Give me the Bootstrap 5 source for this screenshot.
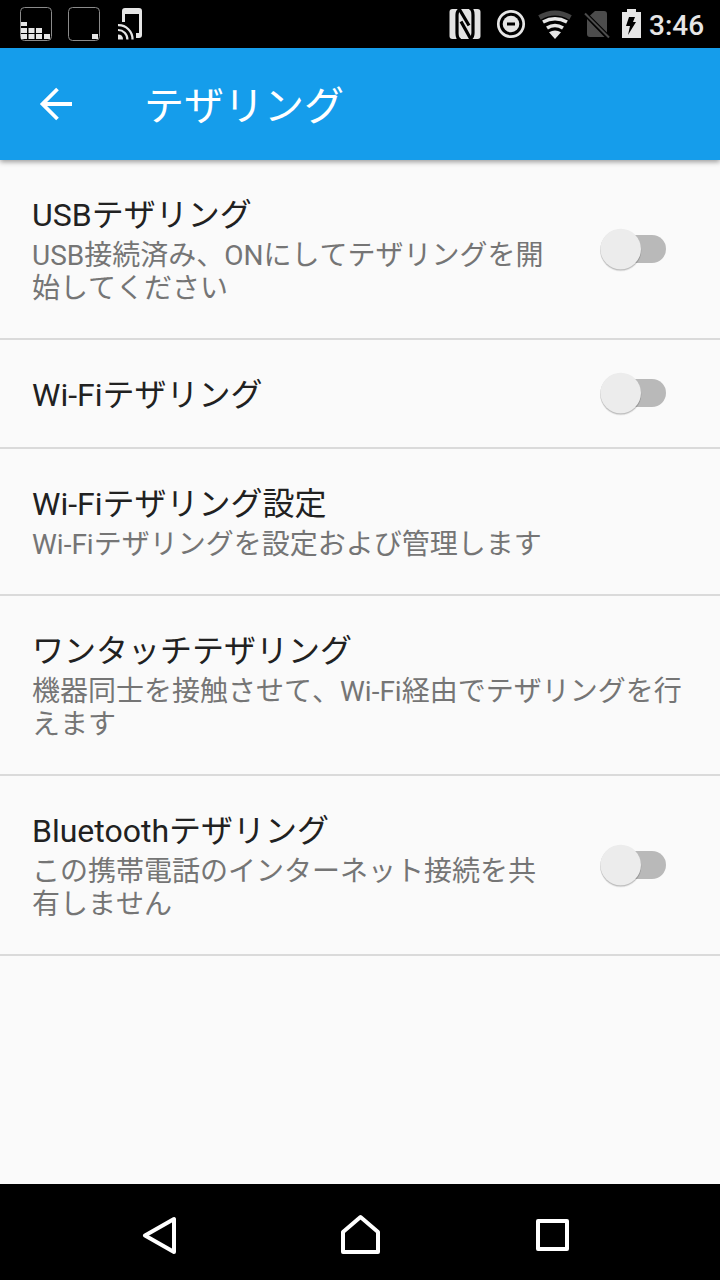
<!DOCTYPE html>
<html lang="ja">
<head>
<meta charset="utf-8">
<meta name="viewport" content="width=device-width, initial-scale=1">
<title>テザリング</title>
<link href="https://cdn.jsdelivr.net/npm/bootstrap@5.3.0/dist/css/bootstrap.min.css" rel="stylesheet">
<style>
  body { font-family: Roboto, "Noto Sans CJK JP", sans-serif; background: #fafafa; color: #212121; }
  .screen { height: 1280px; overflow: hidden; }
  .statusbar { height: 48px; background: #000; }
  .clock { font-size: 28px; line-height: 51px; font-weight: 500; color: #e6e6e6; width: 55px; }
  .appbar { height: 112px; background: #159deb; box-shadow: 0 2px 5px rgba(0,0,0,.38); z-index: 1; }
  .appbar h1 { font-size: 40px; line-height: 48px; font-weight: 400; padding-top: 5px; }
  .setting { padding: 36px 34px 0 32px; border-bottom: 2px solid #dadada; }
  .setting h2 { font-size: 32px; line-height: 38px; font-weight: 400; }
  .setting p { font-size: 28px; line-height: 33px; color: #757575; margin-top: 5px; font-kerning: none; }
  .h-one { height: 109px; } .h-two { height: 147px; } .h-three { height: 180px; }
  .label-narrow { width: 520px; }
  .toggle { width: 80px; height: 56px; margin-top: 25px; }
  .h-one .toggle { margin-top: -11px; }
  .navkeys { height: 96px; background: #000; }
</style>
</head>
<body>
<svg class="d-none" aria-hidden="true">
  <symbol id="switch-off" viewBox="0 0 80 56">
    <rect x="20" y="14" width="56" height="28" rx="14" fill="#b9b9b9"/>
    <circle cx="30.7" cy="29.8" r="20.7" fill="#000" opacity=".06"/>
    <circle cx="30.7" cy="29" r="20.5" fill="#000" opacity=".18"/>
    <circle cx="30.7" cy="28" r="20.3" fill="#ececec"/>
  </symbol>
</svg>
<div class="screen d-flex flex-column">
  <div class="statusbar d-flex justify-content-between">
    <svg width="160" height="48" viewBox="0 0 160 48">
      <g fill="none" stroke="#8b8b8b" stroke-width="1"><rect x="20.500" y="7.500" width="31" height="33" rx="4"/><rect x="68.500" y="7.500" width="31" height="33" rx="4"/></g>
      <path fill="#e6e6e6" d="M21 22h6v4h-6zM21 28h6v5h-6zM28.500 28h6v5h-6zM36 28h6v5h-6zM21 34h6v5h-6zM28.500 34h6v5h-6zM36 34h6v5h-6zM44 34h6v5h-6zM92 34h6v5h-6z"/>
      <path fill="#e6e6e6" d="M122 22v-11q0-3 3-3h14q3 0 3 3v24q0 3-3 3h-3v-5h3V14h-14v8z"/>
      <g fill="none" stroke="#e6e6e6" stroke-width="2.200"><path d="M118 25.100a14 14 0 0 1 14.500 14.400M118 30a9.300 9.300 0 0 1 9.400 9.500"/></g>
      <path fill="#e6e6e6" d="M118 34.500q5 0 5 5h-5z"/>
    </svg>
    <div class="d-flex pe-3">
      <svg width="201" height="48" viewBox="448 0 201 48">
        <rect x="449.500" y="9" width="31" height="30" rx="3" fill="#e2e2e2"/>
        <path fill="none" stroke="#000" stroke-width="3.200" d="M460.500 40q-3.500-1-3.500-7V15q0-4 2.500-5.500L469 25.500M469.500 8q3.500 1 3.500 7v18q0 4-2.500 5.500L461 21.500"/>
        <circle cx="511" cy="24" r="12.700" fill="none" stroke="#e6e6e6" stroke-width="2.700"/><circle cx="511" cy="24" r="8.300" fill="#e6e6e6"/><path d="M507 24h8" stroke="#000" stroke-width="3"/>
        <path d="M539.500 17.500q15.500-9 31 0" fill="none" stroke="#444" stroke-width="5"/>
        <g fill="none" stroke="#e6e6e6" stroke-width="3.600"><path d="M543 22q12-6.500 24 0M547 28q8-5 16 0"/></g><path fill="#e6e6e6" d="M549 32.200q6-3.600 12 0L555 39z"/>
        <path fill="#4c4c4c" d="M595 11h9q3 0 3 3v18.500L590 15.500zM587 19l17.500 18H590q-3 0-3-3z"/><path d="M585 13.500L609 37.500" stroke="#4c4c4c" stroke-width="2"/>
        <path fill="#e6e6e6" d="M622 12h5V9h9v3h5v26h-19z"/><path d="M629 17h6l-2 5h3l-8 13 2-9h-4z" fill="#000"/>
      </svg>
      <span class="clock">3:46</span>
    </div>
  </div>
  <header class="appbar d-flex align-items-center position-relative text-white">
    <svg width="144" height="112" viewBox="0 48 144 112" fill="none" stroke="#fff" stroke-width="3.800"><path d="M72 104H43M57.500 89L42.500 104l15 15"/></svg>
    <h1 class="mb-0">テザリング</h1>
  </header>
  <main class="flex-grow-1">
    <section class="setting h-three d-flex justify-content-between">
      <div class="label-narrow"><h2 class="mb-0">USBテザリング</h2><p class="mb-0">USB接続済み、ONにしてテザリングを開<br>始してください</p></div>
      <svg class="toggle me-3"><use href="#switch-off"/></svg>
    </section>
    <section class="setting h-one d-flex justify-content-between">
      <h2 class="mb-0">Wi-Fiテザリング</h2>
      <svg class="toggle me-3"><use href="#switch-off"/></svg>
    </section>
    <section class="setting h-two"><h2 class="mb-0">Wi-Fiテザリング設定</h2><p class="mb-0">Wi-Fiテザリングを設定および管理します</p></section>
    <section class="setting h-three"><h2 class="mb-0">ワンタッチテザリング</h2><p class="mb-0 text-nowrap">機器同士を接触させて、Wi-Fi経由でテザリングを行<br>えます</p></section>
    <section class="setting h-three d-flex justify-content-between">
      <div class="label-narrow"><h2 class="mb-0">Bluetoothテザリング</h2><p class="mb-0">この携帯電話のインターネット接続を共<br>有しません</p></div>
      <svg class="toggle me-3"><use href="#switch-off"/></svg>
    </section>
  </main>
  <nav class="navkeys">
    <svg width="720" height="96" viewBox="0 1184 720 96" fill="none" stroke="#fff" stroke-width="4" stroke-linejoin="round"><path d="M174 1219v33l-29-16.500zM343 1252v-20l17.500-15 17.500 15v20z"/><rect x="538" y="1221" width="29" height="28"/></svg>
  </nav>
</div>
<script src="https://cdn.jsdelivr.net/npm/bootstrap@5.3.0/dist/js/bootstrap.bundle.min.js"></script>
</body>
</html>
